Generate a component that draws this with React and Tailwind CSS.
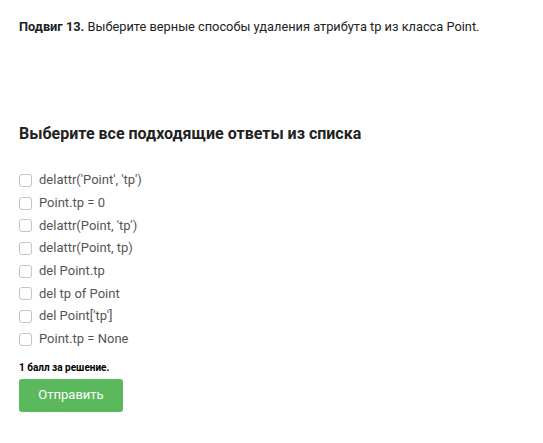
export default function App() {
  const options = [
    "delattr('Point', 'tp')",
    "Point.tp = 0",
    "delattr(Point, 'tp')",
    "delattr(Point, tp)",
    "del Point.tp",
    "del tp of Point",
    "del Point['tp']",
    "Point.tp = None",
  ];
  return (
    <div className="w-[543px] h-[443px] bg-white px-[19px] pt-[18px] text-[#222]" style={{ fontFamily: "Roboto, sans-serif" }}>
      <p className="text-[12.8px] leading-[18px] text-[#222]">
        <b className="font-bold">Подвиг 13.</b> Выберите верные способы удаления атрибута tp из класса Point.
      </p>
      <h2 className="mt-[87px] text-[16px] leading-[22px] font-bold text-[#222]">Выберите все подходящие ответы из списка</h2>
      <div className="mt-[24px] flex flex-col">
        {options.map((o) => (
          <label key={o} className="flex items-center h-[22.7px] gap-[7px]">
            <span className="w-[13px] h-[13px] rounded-[3px] border border-[#c4c4c4] bg-white shrink-0" />
            <span className="text-[13px] text-[#555] leading-[18px]">{o}</span>
          </label>
        ))}
      </div>
      <p className="mt-[10px] text-[10px] font-bold text-black leading-[14px]">1 балл за решение.</p>
      <button className="mt-[4px] w-[104px] h-[33px] rounded-[3px] bg-[#5cb85c] text-white text-[13px]">Отправить</button>
    </div>
  );
}
